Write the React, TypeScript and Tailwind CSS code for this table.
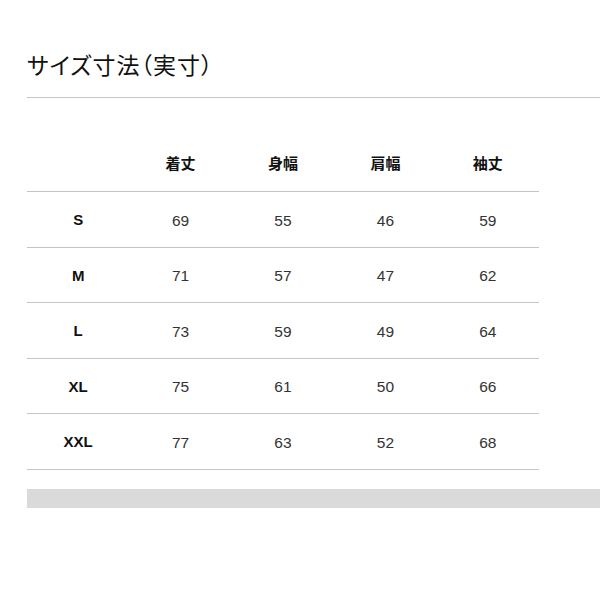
const headers = ['着丈', '身幅', '肩幅', '袖丈'];

const rows: [string, number[]][] = [
  ['S', [69, 55, 46, 59]],
  ['M', [71, 57, 47, 62]],
  ['L', [73, 59, 49, 64]],
  ['XL', [75, 61, 50, 66]],
  ['XXL', [77, 63, 52, 68]],
];

export default function App() {
  return (
    <div
      className="w-[600px] h-[600px] bg-white overflow-hidden pl-[27px] text-[#111]"
      style={{ fontFamily: '"Liberation Sans", "Noto Sans CJK JP", sans-serif' }}
    >
      {/* Title */}
      <div className="pt-[50px] pb-[15px] border-b border-[#c4c4c4]">
        <h1 className="text-[23px] leading-[32px] font-normal [font-feature-settings:'palt'] tracking-[1px]">
          サイズ寸法（実寸）
        </h1>
      </div>

      {/* Size table */}
      <div className="w-[512px] mt-[39px] text-[15px]">
        <div className="grid grid-cols-5 h-[55px] items-center border-b border-[#c4c4c4] pt-px">
          <div />
          {headers.map((h) => (
            <div key={h} className="text-center font-bold">
              {h}
            </div>
          ))}
        </div>
        {rows.map(([size, vals]) => (
          <div key={size} className="grid grid-cols-5 h-[55.6px] items-center border-b border-[#c4c4c4] pt-[2px]">
            <div className="text-center font-bold">{size}</div>
            {vals.map((v, i) => (
              <div key={i} className="text-center text-[15.5px] text-[#333]">
                {v}
              </div>
            ))}
          </div>
        ))}
      </div>

      {/* Bottom bar */}
      <div className="mt-[19px] h-[19px] bg-[#dadada]" />
    </div>
  );
}
